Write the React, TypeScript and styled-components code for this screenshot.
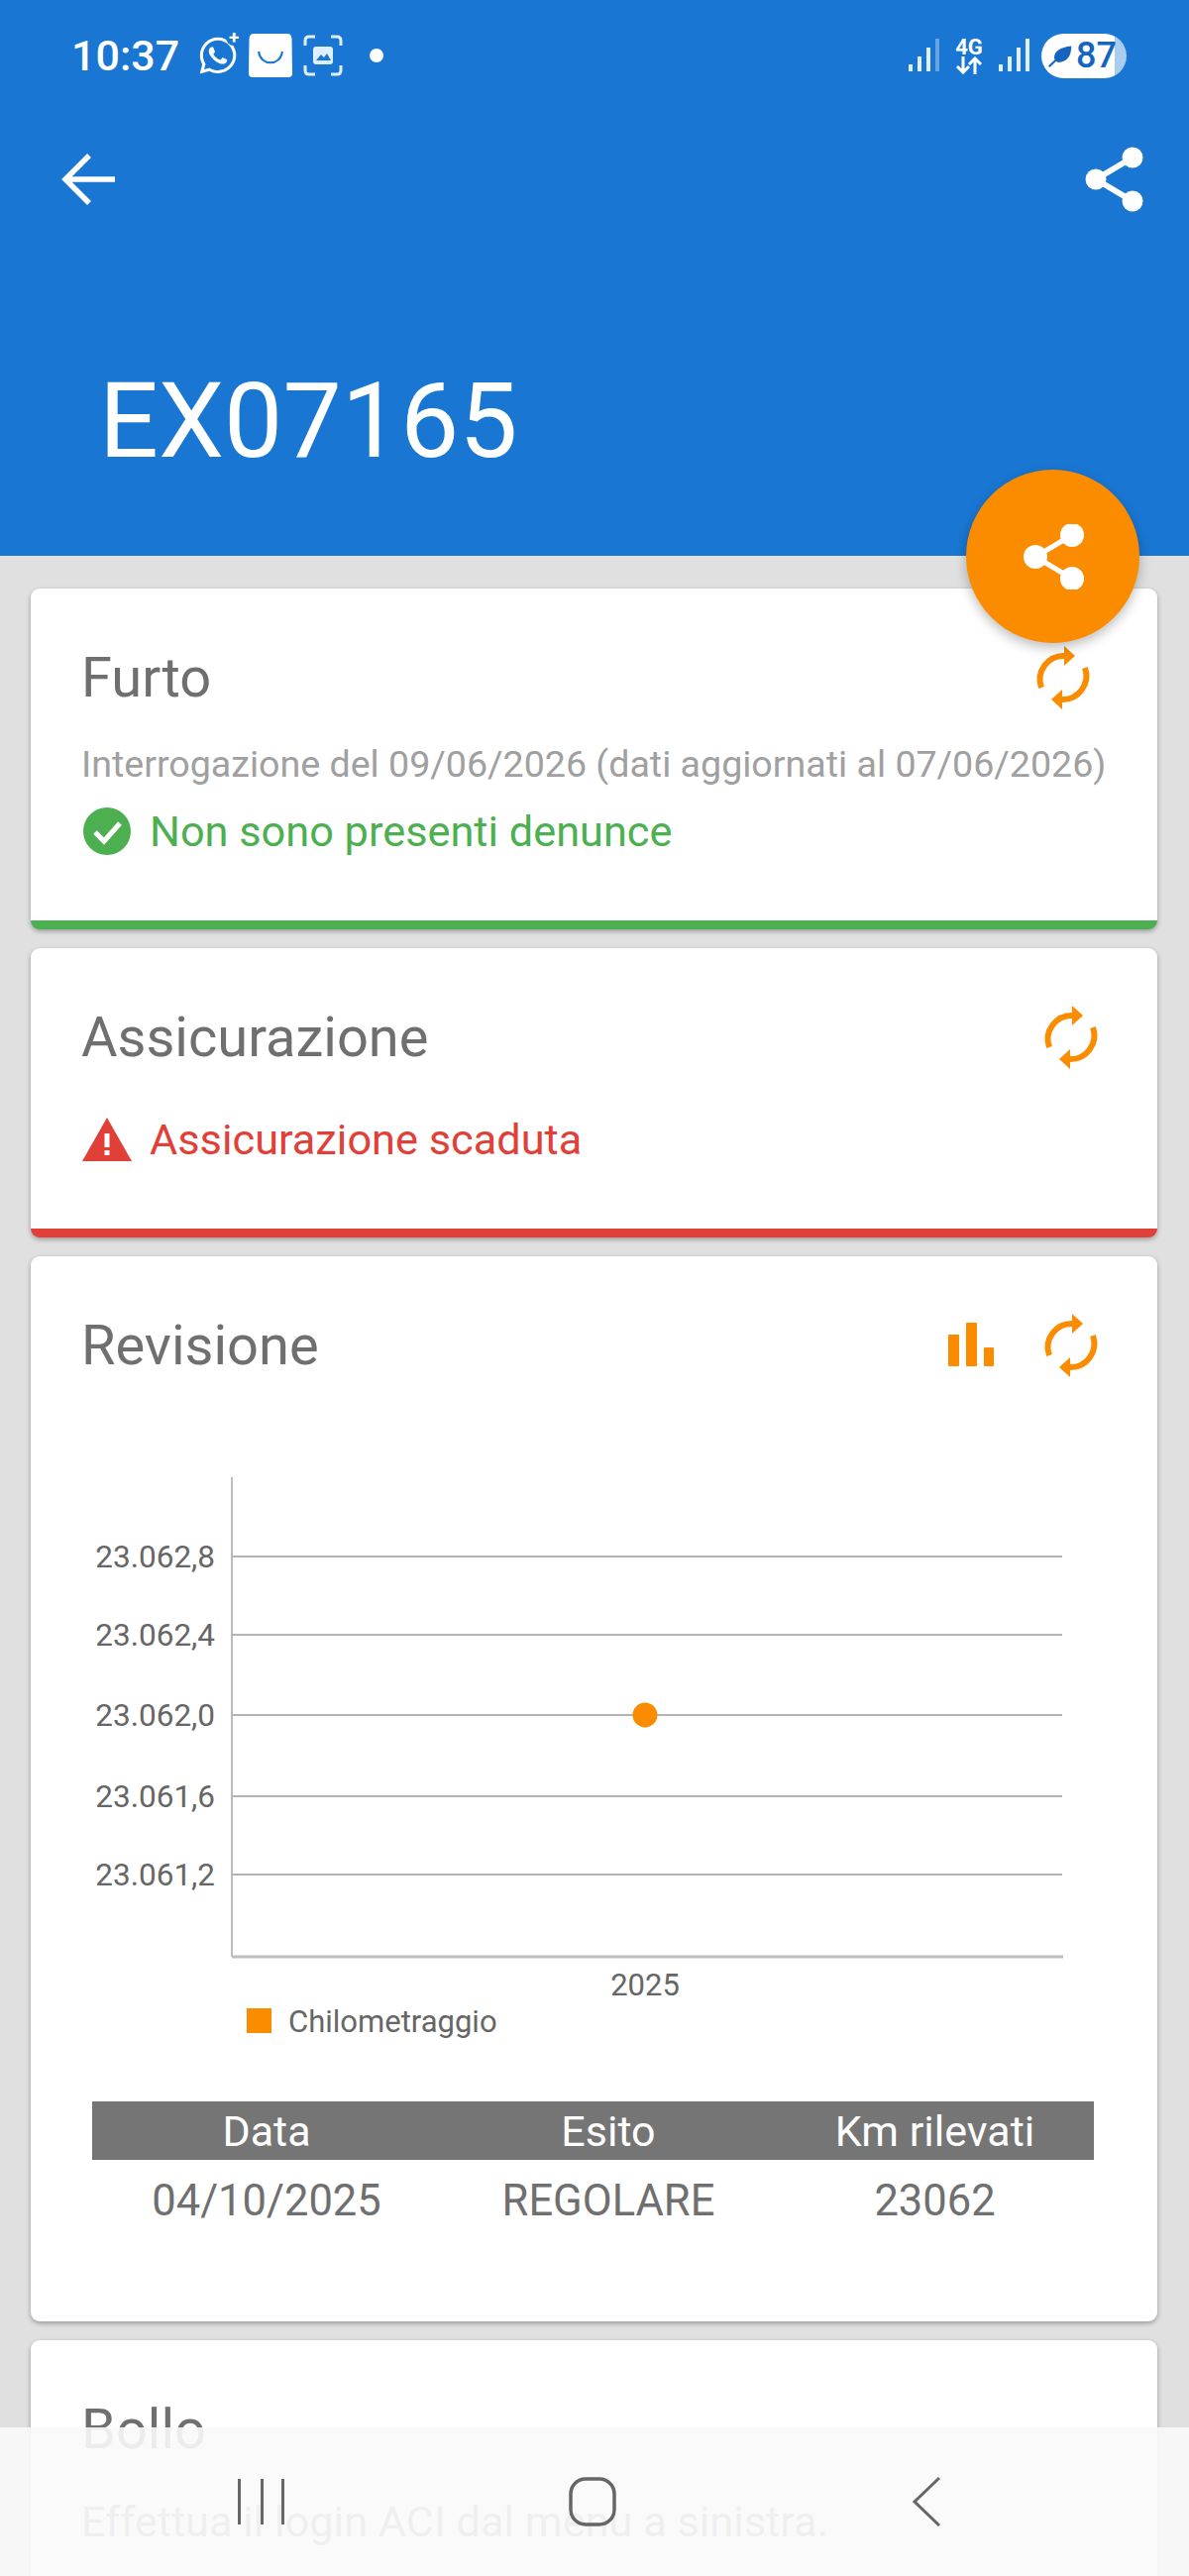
import React from 'react';
import styled, { createGlobalStyle } from 'styled-components';
import { FaWhatsapp } from 'react-icons/fa';

const GlobalStyle = createGlobalStyle`
  html, body {
    margin: 0;
    padding: 0;
    background: #e0e0e0;
    font-family: Roboto, "Liberation Sans", sans-serif;
  }
`;

const ORANGE = '#fb8c00';
const RED = '#e04038';

const Page = styled.div`
  position: relative;
  width: 1200px;
  height: 2600px;
  overflow: hidden;
  background: #e0e0e0;
`;

const Header = styled.header`
  height: 561px;
  background: #1976d2;
  color: #fff;
`;

const StatusBar = styled.div`
  display: flex;
  align-items: center;
  justify-content: space-between;
  height: 112px;
  padding: 0 63px 0 72px;
`;

const StatusGroup = styled.div`
  display: flex;
  align-items: center;
`;

const Clock = styled.span`
  font-size: 43px;
  font-weight: 500;
  margin-right: 18px;
`;

const WhatsappWrap = styled.span`
  position: relative;
  display: flex;
  width: 42px;
  height: 42px;
  margin-right: 10px;
  font-size: 42px;
`;

const PlusBadge = styled.span`
  position: absolute;
  top: -5px;
  right: -3px;
  width: 16px;
  height: 16px;
  border-radius: 50%;
  background: #1976d2;
  color: #fff;
  font-size: 19px;
  font-weight: 700;
  line-height: 15px;
  text-align: center;
`;

const BagIcon = styled.svg`
  margin-right: 11px;
`;

const ScanIcon = styled.svg`
  margin-right: 27px;
`;

const Dot = styled.span`
  width: 14px;
  height: 14px;
  border-radius: 50%;
  background: #fff;
`;

const SignalIcon = styled.svg<{ $gap: number }>`
  margin-right: ${(p) => p.$gap}px;
`;

const NetworkType = styled.span`
  display: flex;
  flex-direction: column;
  align-items: center;
  width: 30px;
  margin-right: 15px;
  font-size: 22px;
  font-weight: 700;
  line-height: 19px;
`;

const Battery = styled.span`
  display: flex;
  align-items: center;
  gap: 3px;
  width: 86px;
  height: 45px;
  padding-left: 6px;
  box-sizing: border-box;
  border-radius: 23px;
  background: linear-gradient(90deg, #fff 0 86%, #a9cdf0 86% 100%);
  color: #1565c0;
  font-size: 36px;
  font-weight: 500;
`;

const Toolbar = styled.div`
  display: flex;
  align-items: center;
  justify-content: space-between;
  height: 138px;
  padding: 0 43px 0 60px;
`;

const Plate = styled.h1`
  margin: 115px 0 0;
  padding-left: 100px;
  font-size: 105.5px;
  font-weight: 400;
  line-height: 120px;
`;

const Fab = styled.button`
  position: absolute;
  top: 474px;
  left: 975px;
  display: flex;
  align-items: center;
  justify-content: center;
  width: 175px;
  height: 175px;
  padding: 0;
  border: none;
  border-radius: 50%;
  background: ${ORANGE};
  box-shadow: 0 5px 12px rgba(0, 0, 0, 0.25);
`;

const CardList = styled.main`
  display: flex;
  flex-direction: column;
  gap: 19px;
  padding: 33px 32px 0 31px;
`;

const Card = styled.section<{ $accent?: string; $bottom?: number }>`
  padding: 58px 54px ${(p) => p.$bottom ?? 0}px 51px;
  background: #fff;
  border-radius: 9px;
  border-bottom: ${(p) => (p.$accent ? `9px solid ${p.$accent}` : 'none')};
  box-shadow: 0 2px 5px rgba(0, 0, 0, 0.32);
`;

const CardHeader = styled.div<{ $inset?: number }>`
  display: flex;
  align-items: center;
  justify-content: space-between;
  height: 64px;
  padding-right: ${(p) => p.$inset ?? 0}px;
`;

const CardTitle = styled.h2`
  margin: 0;
  color: #6f6f6f;
  font-size: 56px;
  font-weight: 400;
  line-height: 64px;
`;

const CardActions = styled.div`
  display: flex;
  align-items: center;
  gap: 45px;
`;

const Query = styled.p`
  margin: 33px 0 0;
  color: #a0a0a0;
  font-size: 37.6px;
  line-height: 44px;
  white-space: nowrap;
`;

const StatusRow = styled.div<{ $color: string; $top: number }>`
  display: flex;
  align-items: center;
  gap: 17px;
  height: 52px;
  margin-top: ${(p) => p.$top}px;
  color: ${(p) => p.$color};
  font-size: 43.3px;
`;

const Chart = styled.svg`
  display: block;
  margin-top: 50px;
`;

const ResultsTable = styled.div`
  width: 1011px;
  margin: 41px 0 0 11px;
  padding-bottom: 81px;
`;

const TableRow = styled.div<{ $head?: boolean }>`
  display: grid;
  grid-template-columns: 352px 338px 321px;
  align-items: center;
  height: ${(p) => (p.$head ? 59 : 82)}px;
  background: ${(p) => (p.$head ? '#757575' : 'transparent')};
  color: ${(p) => (p.$head ? '#fff' : '#6f6f6f')};
  font-size: ${(p) => (p.$head ? 43 : 43.5)}px;
  text-align: center;
`;

const LoginHint = styled.p`
  margin: 37px 0 0;
  color: #8f8f8f;
  font-size: 43.3px;
  line-height: 50px;
  white-space: nowrap;
`;

const NavBar = styled.nav`
  position: absolute;
  left: 0;
  right: 0;
  bottom: 0;
  display: grid;
  grid-template-columns: 338px 346px auto;
  align-items: center;
  height: 150px;
  padding-left: 236px;
  background: rgba(250, 250, 250, 0.9);
`;

const ShareGlyph = ({ r, sw }: { r: number; sw: number }) => (
  <svg width="66" height="66" viewBox="0 0 60 66" fill="#fff" stroke="#fff">
    <line x1="12" y1="33" x2="49" y2="11" strokeWidth={sw} />
    <line x1="12" y1="33" x2="49" y2="55" strokeWidth={sw} />
    <circle cx="12" cy="33" r={r} stroke="none" />
    <circle cx="49" cy="11" r={r} stroke="none" />
    <circle cx="49" cy="55" r={r} stroke="none" />
  </svg>
);

const RefreshIcon = () => (
  <svg width="66" height="66" viewBox="-33 -33 66 66" fill={ORANGE} stroke="none">
    <path d="M-22 10A24 24 0 0 1 2 -22" fill="none" stroke={ORANGE} strokeWidth="6" />
    <path d="M22 -10A24 24 0 0 1 -2 22" fill="none" stroke={ORANGE} strokeWidth="6" />
    <path d="M1 -32L12 -22L1 -12Z" />
    <path d="M-1 32L-12 22L-1 12Z" />
  </svg>
);

const BarsIcon = () => (
  <svg width="46" height="46" viewBox="0 0 46 46" fill={ORANGE}>
    <rect x="0" y="12" width="11" height="32" rx="1" />
    <rect x="18" y="0" width="11" height="44" rx="1" />
    <rect x="36" y="25" width="10" height="19" rx="1" />
  </svg>
);

const CheckIcon = () => (
  <svg width="52" height="52" viewBox="0 0 52 52">
    <circle cx="26" cy="26" r="24" fill="#4caf50" />
    <path d="M14 27L23 36L39 18" fill="none" stroke="#fff" strokeWidth="5" />
  </svg>
);

const WarningIcon = () => (
  <svg width="52" height="46" viewBox="0 0 52 46">
    <path d="M26 1L51 45H1Z" fill={RED} />
    <rect x="23.5" y="17" width="5" height="14" fill="#fff" />
    <rect x="23.5" y="34" width="5" height="5" fill="#fff" />
  </svg>
);

const Signal = ({ faded, gap }: { faded?: boolean; gap: number }) => (
  <SignalIcon $gap={gap} width="31" height="34" viewBox="0 0 31 34" fill="#dff0fc">
    <rect x="0" y="26" width="4" height="7" />
    <rect x="9" y="18" width="4" height="15" />
    <rect x="18" y="9" width="4" height="24" />
    <rect x="27" y="0" width="4" height="33" opacity={faded ? 0.4 : 1} />
  </SignalIcon>
);

const yTicks = [
  { label: '23.062,8', y: 131 },
  { label: '23.062,4', y: 210 },
  { label: '23.062,0', y: 291 },
  { label: '23.061,6', y: 373 },
  { label: '23.061,2', y: 452 },
];

const App: React.FC = () => {
  return (
    <Page>
      <GlobalStyle />
      <Header>
        <StatusBar>
          <StatusGroup>
            <Clock>10:37</Clock>
            <WhatsappWrap>
              <FaWhatsapp />
              <PlusBadge>+</PlusBadge>
            </WhatsappWrap>
            <BagIcon width="44" height="44" viewBox="0 0 44 44">
              <path d="M5 0H39Q43 0 43.500 5L44 40Q44 44 40 44H4Q0 44 0 40L0.500 5Q1 0 5 0Z" fill="#fff" />
              <path d="M10 18C12 33 32 33 34 18" fill="none" stroke="#1976d2" strokeWidth="2" />
            </BagIcon>
            <ScanIcon width="40" height="42" viewBox="0 0 40 42" fill="none" stroke="#dff0fc" strokeWidth="3">
              <path d="M2 11V6Q2 2 6 2H12M28 2H34Q38 2 38 6V11M38 31V36Q38 40 34 40H28M12 40H6Q2 40 2 36V31" />
              <rect x="10" y="12" width="20" height="18" rx="3" fill="#dff0fc" stroke="none" />
              <path d="M13 26L18 20L21 23L24 19L28 26Z" fill="#1976d2" stroke="none" />
            </ScanIcon>
            <Dot />
          </StatusGroup>
          <StatusGroup>
            <Signal faded gap={15} />
            <NetworkType>
              4G
              <svg width="28" height="18" viewBox="0 0 28 18" fill="none" stroke="#fff" strokeWidth="3">
                <path d="M8 0V16M2 10L8 16L14 10" />
                <path d="M20 18V2M14 8L20 2L26 8" />
              </svg>
            </NetworkType>
            <Signal gap={12} />
            <Battery>
              <svg width="26" height="28" viewBox="0 0 30 30">
                <path d="M8 18Q8 6 28 4Q28 22 13 23Q10 23 8 18Z" fill="#1565c0" />
                <path d="M2 28L20 11" stroke="#1565c0" strokeWidth="2.500" />
              </svg>
              87
            </Battery>
          </StatusGroup>
        </StatusBar>
        <Toolbar>
          <svg width="58" height="56" viewBox="0 0 58 56" fill="none" stroke="#fff" strokeWidth="5.500">
            <path d="M56 28H6M30 4L6 28L30 52" />
          </svg>
          <ShareGlyph r={10.5} sw={6} />
        </Toolbar>
        <Plate>EX07165</Plate>
      </Header>

      <Fab aria-label="Condividi">
        <ShareGlyph r={12} sw={5} />
      </Fab>

      <CardList>
        <Card $accent="#4caf50" $bottom={64}>
          <CardHeader $inset={8}>
            <CardTitle>Furto</CardTitle>
            <RefreshIcon />
          </CardHeader>
          <Query>Interrogazione del 09/06/2026 (dati aggiornati al 07/06/2026)</Query>
          <StatusRow $color="#4caf50" $top={20}>
            <CheckIcon />
            Non sono presenti denunce
          </StatusRow>
        </Card>

        <Card $accent={RED} $bottom={64}>
          <CardHeader>
            <CardTitle>Assicurazione</CardTitle>
            <RefreshIcon />
          </CardHeader>
          <StatusRow $color={RED} $top={45}>
            <WarningIcon />
            Assicurazione scaduta
          </StatusRow>
        </Card>

        <Card>
          <CardHeader>
            <CardTitle>Revisione</CardTitle>
            <CardActions>
              <BarsIcon />
              <RefreshIcon />
            </CardActions>
          </CardHeader>
          <Chart width="1000" height="640" viewBox="82 1440 1000 640" fontFamily="Roboto, sans-serif">
            <line x1="234" y1="1491" x2="234" y2="1975" stroke="#bdbdbd" strokeWidth="2" />
            {yTicks.map((t) => (
              <g key={t.label}>
                <line x1="234" y1={1440 + t.y} x2="1072" y2={1440 + t.y} stroke="#b4b4b4" strokeWidth="2" />
                <text x="217" y={1440 + t.y + 11} fontSize="31.500" fill="#666" textAnchor="end">
                  {t.label}
                </text>
              </g>
            ))}
            <line x1="234" y1="1975" x2="1073" y2="1975" stroke="#bdbdbd" strokeWidth="3" />
            <circle cx="651" cy="1731" r="12.500" fill={ORANGE} />
            <text x="651" y="2014" fontSize="31" fill="#666" textAnchor="middle">
              2025
            </text>
            <rect x="249" y="2027" width="25" height="25" fill={ORANGE} />
            <text x="291" y="2051" fontSize="31" fill="#666">
              Chilometraggio
            </text>
          </Chart>
          <ResultsTable>
            <TableRow $head>
              <span>Data</span>
              <span>Esito</span>
              <span>Km rilevati</span>
            </TableRow>
            <TableRow>
              <span>04/10/2025</span>
              <span>REGOLARE</span>
              <span>23062</span>
            </TableRow>
          </ResultsTable>
        </Card>

        <Card $bottom={60}>
          <CardHeader>
            <CardTitle>Bollo</CardTitle>
          </CardHeader>
          <LoginHint>Effettua il login ACI dal menu a sinistra.</LoginHint>
        </Card>
      </CardList>

      <NavBar>
        <svg width="54" height="48" viewBox="0 0 54 48" fill="#666">
          <rect x="4" y="1" width="3" height="46" />
          <rect x="27" y="1" width="3" height="46" />
          <rect x="48" y="1" width="3" height="46" />
        </svg>
        <svg width="48" height="50" viewBox="0 0 48 50" fill="none" stroke="#666" strokeWidth="3.500">
          <rect x="2" y="2" width="44" height="46" rx="15" />
        </svg>
        <svg width="30" height="52" viewBox="0 0 30 52" fill="none" stroke="#666" strokeWidth="3">
          <path d="M28 2L3 26L28 50" />
        </svg>
      </NavBar>
    </Page>
  );
};

export default App;
